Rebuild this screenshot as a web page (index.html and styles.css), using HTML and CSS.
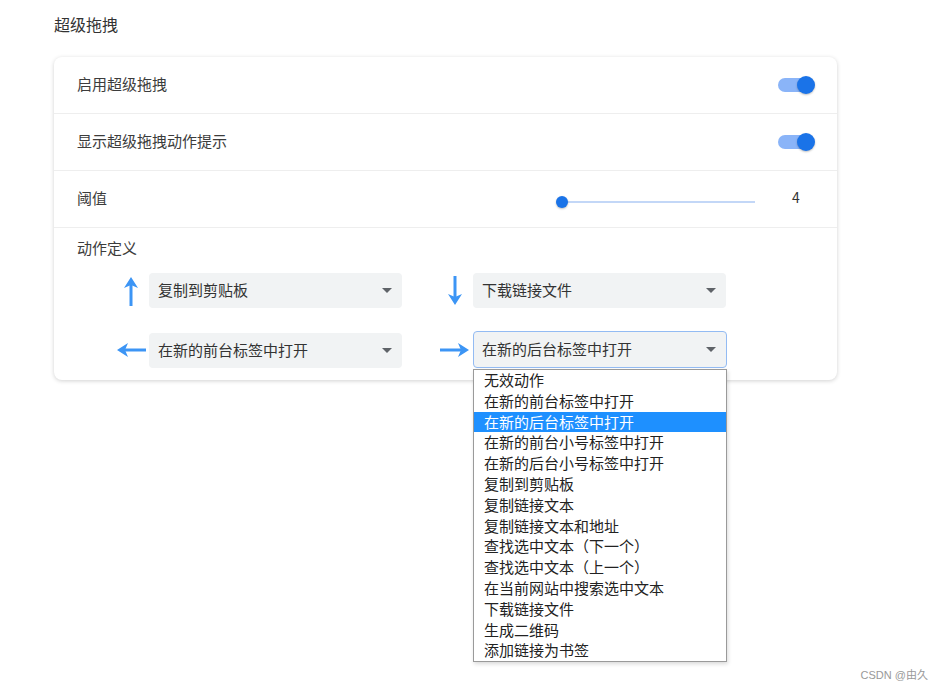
FILE: index.html
```html
<!DOCTYPE html>
<html lang="zh-CN">
<head>
    <meta charset="UTF-8">
    <meta name="viewport" content="width=device-width, initial-scale=1.0">
    <title>超级拖拽</title>
    <link rel="stylesheet" href="styles.css">
</head>
<body>
    <div class="page">
        <h2 class="section-title">超级拖拽</h2>

        <div class="card">
            <div class="row">
                <span class="label">启用超级拖拽</span>
                <div class="toggle on"><span class="knob"></span></div>
            </div>
            <div class="row">
                <span class="label">显示超级拖拽动作提示</span>
                <div class="toggle on"><span class="knob"></span></div>
            </div>
            <div class="row">
                <span class="label">阈值</span>
                <div class="slider-wrap">
                    <div class="slider">
                        <span class="slider-track"></span>
                        <span class="slider-knob"></span>
                    </div>
                    <span class="slider-value">4</span>
                </div>
            </div>

            <div class="actions">
                <div class="label">动作定义</div>
                <div class="action-grid">
                    <div class="action">
                        <span class="dir">
                            <svg width="16" height="30" viewBox="0 0 16 30"><path d="M8 9V30" stroke="#3c95f5" stroke-width="3"/><path d="M8 1L15 12L8 9L1 12Z" fill="#3c95f5"/></svg>
                        </span>
                        <div class="select"><span>复制到剪贴板</span><span class="caret"></span></div>
                    </div>
                    <div class="action">
                        <span class="dir">
                            <svg width="16" height="30" viewBox="0 0 16 30"><path d="M8 0V21" stroke="#3c95f5" stroke-width="3"/><path d="M8 29L15 18L8 21L1 18Z" fill="#3c95f5"/></svg>
                        </span>
                        <div class="select"><span>下载链接文件</span><span class="caret"></span></div>
                    </div>
                    <div class="action">
                        <span class="dir">
                            <svg width="30" height="16" viewBox="0 0 30 16"><path d="M9 8H30" stroke="#3c95f5" stroke-width="3"/><path d="M1 8L12 1L9 8L12 15Z" fill="#3c95f5"/></svg>
                        </span>
                        <div class="select"><span>在新的前台标签中打开</span><span class="caret"></span></div>
                    </div>
                    <div class="action">
                        <span class="dir">
                            <svg width="30" height="16" viewBox="0 0 30 16"><path d="M0 8H21" stroke="#3c95f5" stroke-width="3"/><path d="M29 8L18 1L21 8L18 15Z" fill="#3c95f5"/></svg>
                        </span>
                        <div class="select-holder">
                            <div class="select focused"><span>在新的后台标签中打开</span><span class="caret"></span></div>
                            <ul class="dropdown">
                                <li>无效动作</li>
                                <li>在新的前台标签中打开</li>
                                <li class="selected">在新的后台标签中打开</li>
                                <li>在新的前台小号标签中打开</li>
                                <li>在新的后台小号标签中打开</li>
                                <li>复制到剪贴板</li>
                                <li>复制链接文本</li>
                                <li>复制链接文本和地址</li>
                                <li>查找选中文本（下一个）</li>
                                <li>查找选中文本（上一个）</li>
                                <li>在当前网站中搜索选中文本</li>
                                <li>下载链接文件</li>
                                <li>生成二维码</li>
                                <li>添加链接为书签</li>
                            </ul>
                        </div>
                    </div>
                </div>
            </div>
        </div>
    </div>

    <div class="watermark">CSDN @由久</div>
</body>
</html>
```

FILE: styles.css
```css
html, body {
    min-height: 100%;
}
body {
    margin: 0;
    min-height: 690px;
    font-family: "Noto Sans CJK SC", "Noto Sans", sans-serif;
    color: #333;
    background: #fff;
}
.page {
    padding: 12px 0 0 54px;
    width: 783px;
    min-height: 670px;
}
.section-title {
    margin: 0;
    font-size: 16px;
    font-weight: normal;
    line-height: 24px;
    color: #333;
}
.card {
    margin-top: 21px;
    background: #fff;
    border-radius: 8px;
    box-shadow: 0 1px 4px rgba(0, 0, 0, 0.18);
}
.row {
    height: 56px;
    display: flex;
    align-items: center;
    justify-content: space-between;
    padding: 0 23px;
    border-bottom: 1px solid #eeeeee;
}
.row .label {
    margin-top: -3px;
}
.label {
    font-size: 15px;
    color: #3c3c3c;
}
.toggle {
    position: relative;
    width: 36px;
    height: 14px;
    border-radius: 7px;
    background: #8ab4f8;
}
.toggle .knob {
    position: absolute;
    right: -1px;
    top: -2px;
    width: 18px;
    height: 18px;
    border-radius: 50%;
    background: #1a73e8;
    box-shadow: 0 1px 2px rgba(0, 0, 0, 0.25);
}
.slider-wrap {
    display: flex;
    align-items: center;
    gap: 23px;
}
.slider {
    position: relative;
    width: 199px;
    height: 12px;
    margin-top: 6px;
}
.slider-track {
    position: absolute;
    left: 6px;
    right: 0;
    top: 5px;
    height: 2px;
    background: #c3d7f7;
}
.slider-knob {
    position: absolute;
    left: 0;
    top: 0;
    width: 12px;
    height: 12px;
    border-radius: 50%;
    background: #1a73e8;
    box-shadow: 0 1px 2px rgba(0, 0, 0, 0.25);
}
.slider-value {
    width: 36px;
    margin-top: -4px;
    text-align: center;
    font-size: 14px;
    color: #333;
}
.actions {
    padding: 9px 23px 12px 23px;
}
.actions .label {
    line-height: 22px;
}
.action-grid {
    display: grid;
    grid-template-columns: 286px 287px;
    column-gap: 38px;
    row-gap: 24px;
    margin: 14px 0 0 39px;
}
.action {
    display: flex;
    align-items: center;
    gap: 3px;
}
.dir {
    width: 30px;
    display: flex;
    justify-content: center;
    align-items: center;
}
.dir svg {
    display: block;
}
.select-holder {
    position: relative;
}
.select {
    width: 253px;
    height: 35px;
    box-sizing: border-box;
    display: flex;
    align-items: center;
    justify-content: space-between;
    padding: 0 10px 0 9px;
    background: #f1f3f4;
    border-radius: 4px;
    font-size: 15px;
    color: #333;
}
.select span:first-child {
    margin-top: -2px;
}
.select.focused {
    width: 254px;
    height: 37px;
    margin-top: -1px;
    border: 1px solid #93bbf3;
    padding-left: 8px;
}
.caret {
    width: 0;
    height: 0;
    border-left: 5px solid transparent;
    border-right: 5px solid transparent;
    border-top: 5px solid #5f6368;
}
.dropdown {
    position: absolute;
    left: 0;
    top: 37px;
    width: 254px;
    box-sizing: border-box;
    margin: 0;
    padding: 0;
    list-style: none;
    background: #fff;
    border: 1px solid #9a9a9a;
    box-shadow: 1px 2px 4px rgba(0, 0, 0, 0.15);
    z-index: 2;
}
.dropdown li {
    height: 20.8px;
    line-height: 20.8px;
    padding-left: 10px;
    font-size: 15px;
    color: #222;
    white-space: nowrap;
}
.dropdown li.selected {
    background: #1e90ff;
    color: #fff;
}
.watermark {
    position: absolute;
    right: 14px;
    top: 666px;
    font-family: "Liberation Sans", "Noto Sans CJK SC", sans-serif;
    font-size: 11px;
    color: #999;
}
```
